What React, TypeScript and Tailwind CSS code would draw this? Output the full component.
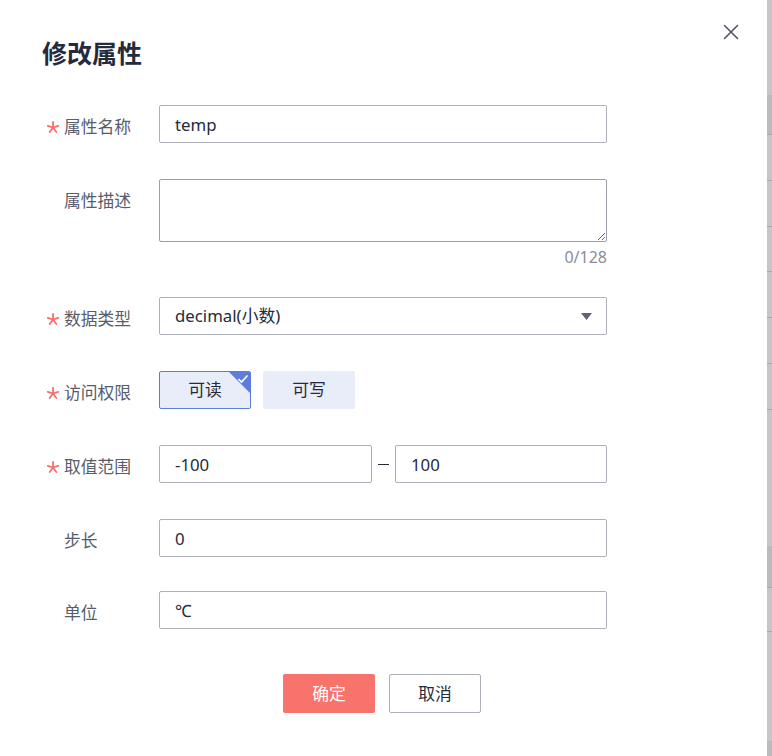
import type { ReactNode } from "react";

const FONT = "font-['Noto_Sans','Noto_Sans_CJK_SC',sans-serif]";

// background table peeking out at the right edge of the dialog
const STRIP = [
  "h-[95px] bg-[#c6c6c6]",
  "h-[39px] bg-[#babbc1]",
  "h-px bg-[#a9a9a9]",
  "h-[45px] bg-[#c6c6c6]",
  "h-px bg-[#a9a9a9]",
  "h-[45px] bg-[#c6c6c6]",
  "h-px bg-[#a9a9a9]",
  "h-[44px] bg-[#c6c6c6]",
  "h-px bg-[#a9a9a9]",
  "h-[45px] bg-[#c6c6c6]",
  "h-px bg-[#a9a9a9]",
  "h-[45px] bg-[#c6c6c6]",
  "h-px bg-[#a9a9a9]",
  "h-[45px] bg-[#c6c6c6]",
  "h-px bg-[#a9a9a9]",
  "h-[136px] bg-[#c6c6c6]",
  "h-[41px] bg-[#babbc1]",
  "h-px bg-[#a9a9a9]",
  "h-[43px] bg-[#c6c6c6]",
  "h-px bg-[#a9a9a9]",
  "h-[109px] bg-[#c6c6c6]",
  "h-[15px] bg-[#babbc1]",
];

function Required() {
  return (
    <svg width="12" height="12" viewBox="0 0 12 12" className="mt-[16px]">
      <g stroke="#f66f6a" strokeWidth="1.8" strokeLinecap="round">
        <line x1="6" y1="6.5" x2="6" y2="1" />
        <line x1="6" y1="6.5" x2="11.2" y2="4.8" />
        <line x1="6" y1="6.5" x2="9.3" y2="11" />
        <line x1="6" y1="6.5" x2="2.7" y2="11" />
        <line x1="6" y1="6.5" x2="0.8" y2="4.8" />
      </g>
    </svg>
  );
}

function Row({
  label,
  required,
  className,
  children,
}: {
  label: string;
  required?: boolean;
  className?: string;
  children: ReactNode;
}) {
  return (
    <div className={`flex ${className ?? ""}`}>
      <div className="w-[17px] shrink-0">{required && <Required />}</div>
      <div className="w-[95px] shrink-0 pt-[10px] text-[16.8px] leading-[24px] text-[#575d6c]">
        {label}
      </div>
      <div className="w-[448px]">{children}</div>
    </div>
  );
}

const inputCls =
  "h-[38px] w-full rounded-[2px] border border-[#adb0b8] px-[15px] text-[16.8px] text-[#252b3a] outline-none";

export default function App() {
  return (
    <div className={`flex h-[756px] w-[772px] overflow-hidden ${FONT}`}>
      <div className="relative h-full w-[767px] bg-white">
        <button className="absolute right-[28px] top-[24px] p-0">
          <svg width="16" height="16" viewBox="0 0 16 16">
            <path
              d="M1.5 1.5 L14.5 14.5 M14.5 1.5 L1.5 14.5"
              stroke="#4d5566"
              strokeWidth="1.6"
              strokeLinecap="round"
            />
          </svg>
        </button>

        <h2 className="pl-[42px] pt-[36px] text-[25px] font-bold leading-[35px] text-[#252b3a]">
          修改属性
        </h2>

        <div className="pl-[47px]">
          <Row label="属性名称" required className="mt-[34px]">
            <input className={inputCls} defaultValue="temp" />
          </Row>

          <Row label="属性描述" className="mt-[36px]">
            <textarea className="block h-[63px] w-full resize-y rounded-[2px] border border-[#9a9ea8] px-[15px] py-[6px] text-[16.8px] text-[#252b3a] outline-none" />
            <div className="mt-[3px] text-right text-[16px] leading-[24px] text-[#8a8e99]">
              0/128
            </div>
          </Row>

          <Row label="数据类型" required className="mt-[28px]">
            <div className="flex h-[38px] items-center justify-between rounded-[2px] border border-[#adb0b8] pl-[15px] pr-[14px] text-[16.8px] text-[#252b3a]">
              <span>decimal(小数)</span>
              <svg width="11" height="7" viewBox="0 0 11 7">
                <path d="M0 0 H11 L5.5 7 Z" fill="#5e6373" />
              </svg>
            </div>
          </Row>

          <Row label="访问权限" required className="mt-[36px]">
            <div className="flex gap-[12px]">
              <div className="relative flex h-[38px] w-[92px] items-center justify-center overflow-hidden rounded-[2px] border border-[#5e7ce0] bg-[#e9edfa] text-[16.8px] text-[#252b3a]">
                可读
                <svg
                  width="21"
                  height="21"
                  viewBox="0 0 21 21"
                  className="absolute right-0 top-0"
                >
                  <path d="M0 0 H21 V21 Z" fill="#5e7ce0" />
                  <path
                    d="M9.5 7 L12.5 10 L18.5 3.5"
                    stroke="white"
                    strokeWidth="1.7"
                    fill="none"
                  />
                </svg>
              </div>
              <div className="flex h-[38px] w-[92px] items-center justify-center rounded-[2px] bg-[#e9edfa] text-[16.8px] text-[#252b3a]">
                可写
              </div>
            </div>
          </Row>

          <Row label="取值范围" required className="mt-[36px]">
            <div className="flex items-center">
              <input className={`${inputCls} !w-[213px]`} defaultValue="-100" />
              <div className="flex w-[23px] justify-center">
                <div className="h-px w-[11px] bg-[#252b3a]" />
              </div>
              <input className={`${inputCls} flex-1`} defaultValue="100" />
            </div>
          </Row>

          <Row label="步长" className="mt-[36px]">
            <input className={inputCls} defaultValue="0" />
          </Row>

          <Row label="单位" className="mt-[34px]">
            <input className={inputCls} defaultValue="℃" />
          </Row>
        </div>

        <div className="mt-[45px] flex justify-center gap-[14px] pr-[3px]">
          <button className="h-[39px] w-[92px] rounded-[2px] bg-[#f7736c] text-[16.8px] text-white">
            确定
          </button>
          <button className="h-[39px] w-[92px] rounded-[2px] border border-[#adb0b8] bg-white text-[16.8px] text-[#252b3a]">
            取消
          </button>
        </div>
      </div>

      <div className="flex w-[5px] flex-col">
        {STRIP.map((cls, i) => (
          <div key={i} className={`shrink-0 ${cls}`} />
        ))}
      </div>
    </div>
  );
}
